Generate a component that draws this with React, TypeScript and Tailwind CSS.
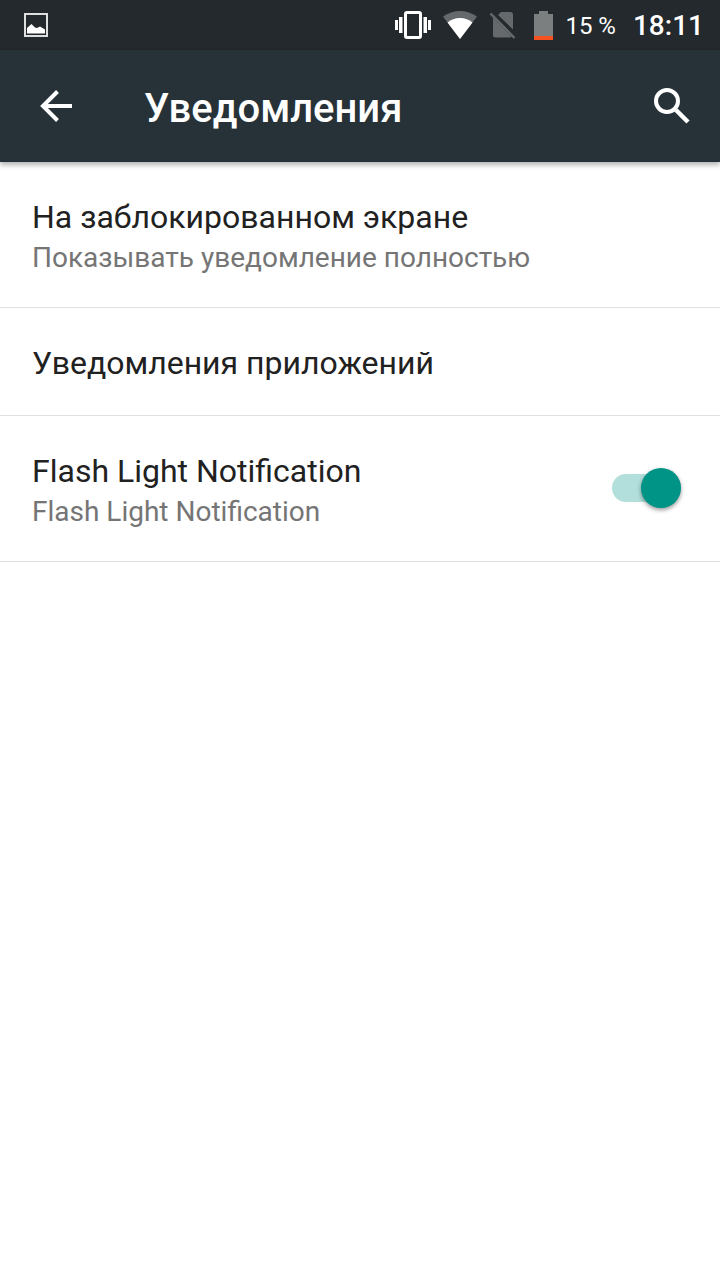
import React, { useState } from 'react';

interface RowTextProps {
  title: string;
  summary?: string;
}

function StatusBar() {
  return (
    <div className="h-[50px] flex items-center bg-[#23292c] pl-6 pr-4 text-white">
      <svg width="24" height="24" viewBox="0 0 24 24" aria-hidden="true">
        <rect x="1" y="1" width="22" height="22" fill="none" stroke="#dedfdf" strokeWidth="2" />
        <path d="M3 20.500V15l4.500-4 3.500 3.500 2 .500 3-1.500 5 3v4z" fill="#fff" />
      </svg>

      <div className="ml-auto flex items-center">
        <svg className="mr-3" width="36" height="28" viewBox="0 0 36 28" aria-hidden="true">
          <rect x="10.500" y="1.500" width="15" height="25" rx="1.500" fill="none" stroke="#fff" strokeWidth="3" />
          <path d="M0 9h3v10H0zM4 6h3.500v16H4zM28.500 6H32v16h-3.500zM33 9h3v10h-3z" fill="#fff" />
        </svg>
        <svg className="mr-3" width="34" height="28" viewBox="0 0 34 28" aria-hidden="true">
          <path d="M17 28L0 5.500C5 2 11 0 17 0s12 2 17 5.500z" fill="#65696b" />
          <path d="M17 28L4.500 11.500C8 8.500 12 7 17 7s9 1.500 12.500 4.500z" fill="#fff" />
        </svg>
        <svg className="mr-[18px]" width="27" height="28" viewBox="0 0 27 28" aria-hidden="true">
          <path d="M12 1h9.500a2.500 2.500 0 0 1 2.500 2.500V18.500L9 4zM4 6.500L22.500 25.500c-.400.800-1 1-2 1H6.500A2.500 2.500 0 0 1 4 24z" fill="#65696b" />
          <path d="M1.500 2.500L25.500 27" stroke="#65696b" strokeWidth="2.500" />
        </svg>
        <svg className="mr-3" width="19" height="29" viewBox="0 0 19 29" aria-hidden="true">
          <path d="M5 0h9v3h5v22H0V3h5z" fill="#7b7f80" />
          <path d="M0 25h19v4H0z" fill="#f4511e" />
        </svg>
        <span className="mr-[17px] pt-0.5 text-2xl">15&nbsp;%</span>
        <span className="pt-0.5 text-[28px] leading-9 font-medium">18:11</span>
      </div>
    </div>
  );
}

function Header() {
  return (
    <header className="relative h-28 flex items-center bg-[#273238] px-6 text-white shadow-[0_3px_5px_rgba(0,0,0,0.3)]">
      <button type="button" aria-label="Назад" className="size-16 flex items-center justify-center">
        <svg width="32" height="32" viewBox="0 0 32 32" fill="none" stroke="#fff" strokeWidth="4" aria-hidden="true">
          <path d="M32 16H3M17.500 1.500L3 16l14.500 14.500" />
        </svg>
      </button>
      <h1 className="ml-14 pt-1.5 flex-1 text-[40px] leading-12 font-medium">Уведомления</h1>
      <button type="button" aria-label="Поиск" className="h-16 w-12 flex items-center justify-center">
        <svg width="36" height="36" viewBox="0 0 36 36" fill="none" stroke="#fff" strokeWidth="4" aria-hidden="true">
          <circle cx="13" cy="13" r="11" />
          <path d="M22 22l12 12" strokeWidth="4.500" />
        </svg>
      </button>
    </header>
  );
}

function RowText({ title, summary }: RowTextProps) {
  return (
    <span className="flex-1 pt-[7px]">
      <span className="block text-[32px] leading-10 text-[#212121]">{title}</span>
      {summary && <span className="block mt-px text-[28px] leading-10 text-[#757575]">{summary}</span>}
    </span>
  );
}

const rowClass = 'w-full min-h-[108px] flex items-start border-b border-[#e0e0e0] px-8 pt-7 pb-[29px] text-left';

export default function App() {
  const [flash, setFlash] = useState(true);

  return (
    <div className="min-h-screen bg-white font-[Roboto,sans-serif]">
      <StatusBar />
      <Header />
      <main>
        <button type="button" className={rowClass}>
          <RowText title="На заблокированном экране" summary="Показывать уведомление полностью" />
        </button>
        <button type="button" className={rowClass}>
          <RowText title="Уведомления приложений" />
        </button>
        <label className={rowClass}>
          <RowText title="Flash Light Notification" summary="Flash Light Notification" />
          <span className="relative mr-[7px] self-center h-10 w-[69px] flex items-center">
            <input
              type="checkbox"
              checked={flash}
              onChange={(e) => setFlash(e.target.checked)}
              className="peer appearance-none h-7 w-full rounded-full bg-[#bdbdbd] checked:bg-[#b2dfdb]"
            />
            <span className="absolute left-0 top-0 size-10 rounded-full bg-[#f1f1f1] shadow-[0_2px_4px_rgba(0,0,0,0.4)] peer-checked:left-[29px] peer-checked:bg-[#009486]" />
          </span>
        </label>
      </main>
    </div>
  );
}
